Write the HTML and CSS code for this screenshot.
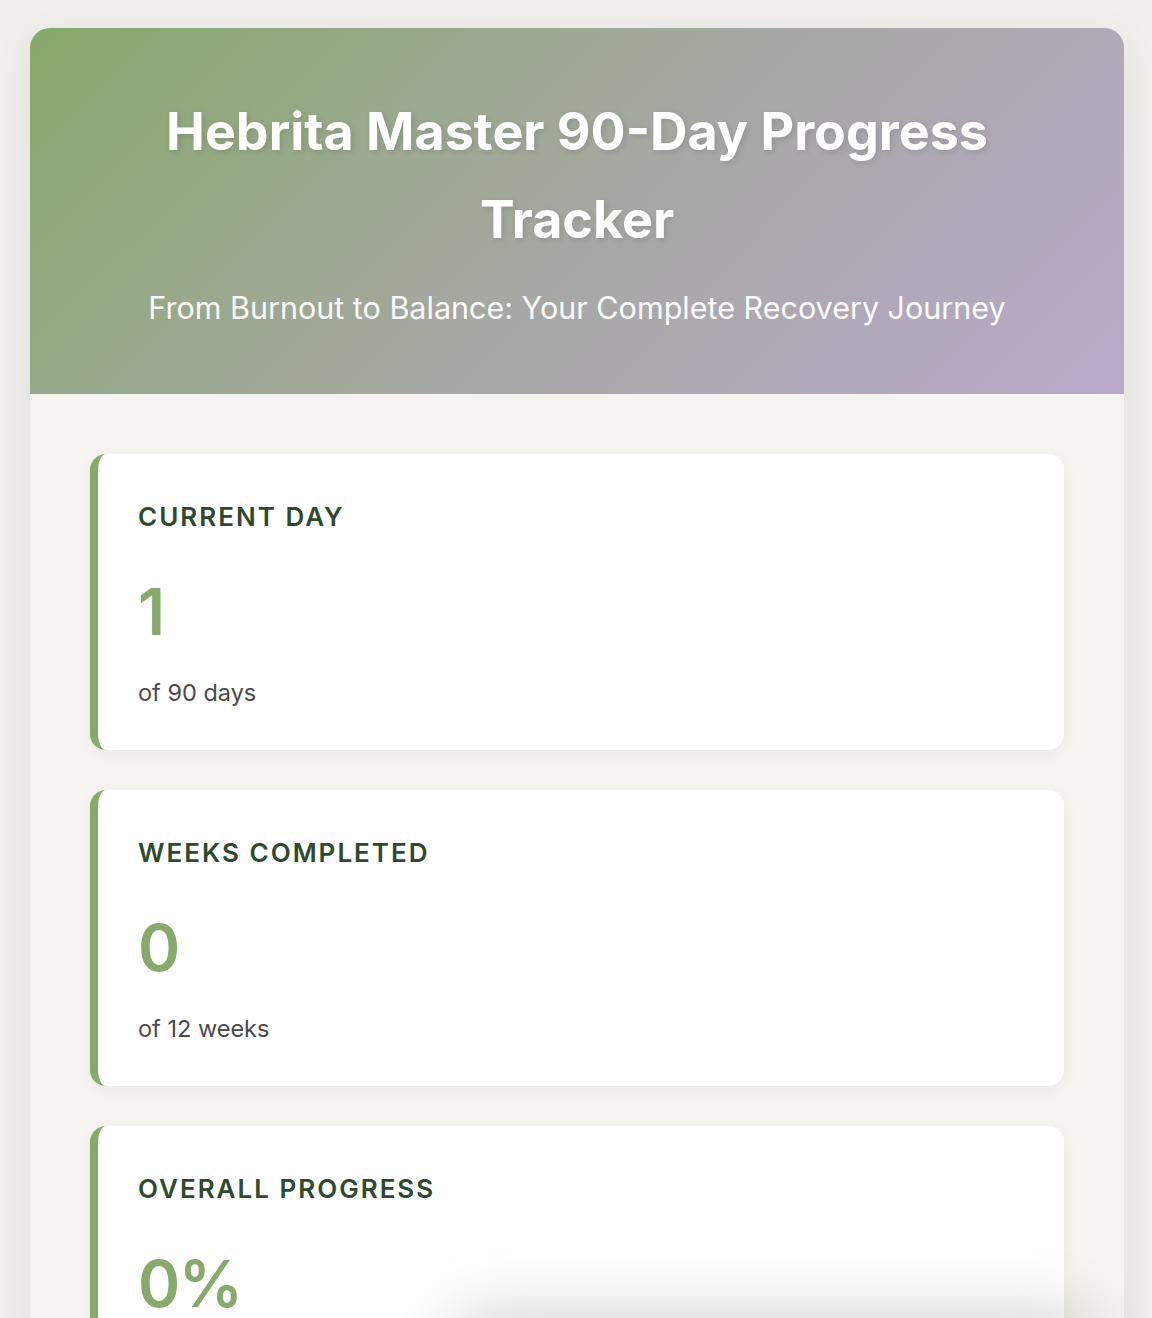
FILE: index.html
```html
<!DOCTYPE html>
<html lang="en">
<head>
    <meta charset="UTF-8">
    <meta name="viewport" content="width=device-width, initial-scale=1.0">
    <title>Hebrita Master 90-Day Progress Tracker</title>
    <link rel="stylesheet" href="styles.css">
</head>
<body>
    <div class="container">
        <header class="header">
            <h1>Hebrita Master 90-Day Progress Tracker</h1>
            <p class="subtitle">From Burnout to Balance: Your Complete Recovery Journey</p>
        </header>
        <div class="stats">
            <div class="stat-card">
                <h3>Current Day</h3>
                <div class="stat-value">1</div>
                <div class="stat-label">of 90 days</div>
            </div>
            <div class="stat-card">
                <h3>Weeks Completed</h3>
                <div class="stat-value">0</div>
                <div class="stat-label">of 12 weeks</div>
            </div>
            <div class="stat-card">
                <h3>Overall Progress</h3>
                <div class="stat-value">0%</div>
                <div class="stat-label">complete</div>
            </div>
        </div>
    </div>
    <div class="toast">Progress saved!</div>
</body>
</html>
```

FILE: styles.css
```css
body {
    margin: 0;
    padding: 28px 0 40px;
    font-family: Inter, "Noto Sans", sans-serif;
    background-color: #f1efeb;
    color: #333;
    line-height: 1.6;
}
.container {
    width: 1094px;
    margin: 0 28px 0 30px;
    background-color: #f5f4f0;
    border-radius: 20px;
    overflow: hidden;
    box-shadow: 0 10px 40px rgba(0, 0, 0, 0.07);
}
.header {
    background: linear-gradient(135deg, #87a96b 0%, #a6a8a2 50%, #b9a9cb 100%);
    color: white;
    text-align: center;
    padding: 60px 90px 62px;
}
.header h1 {
    margin: 0;
    font-size: 52px;
    font-weight: 700;
    line-height: 88px;
    text-shadow: 2px 2px 6px rgba(0, 0, 0, 0.12);
}
.subtitle {
    margin: 20px -50px 0;
    font-size: 30.5px;
    line-height: 48px;
    opacity: 0.95;
}
.stats {
    padding: 60px;
    display: flex;
    flex-direction: column;
    gap: 40px;
}
.stat-card {
    background-color: white;
    border-left: 8px solid #87a96b;
    border-radius: 16px;
    padding: 41px 40px 40px;
    box-shadow: 0 4px 16px rgba(0, 0, 0, 0.05);
}
.stat-card h3 {
    margin: 0 0 23px;
    font-size: 26px;
    font-weight: 600;
    line-height: 43px;
    letter-spacing: 2px;
    text-transform: uppercase;
    color: #2d4a2d;
}
.stat-value {
    font-size: 64px;
    font-weight: 600;
    line-height: 102px;
    letter-spacing: -1.5px;
    color: #87a96b;
    margin-bottom: 12px;
}
.stat-label {
    font-size: 23.5px;
    line-height: 35px;
    color: #4a4a4a;
}
.toast {
    position: fixed;
    right: 60px;
    bottom: -110px;
    width: 640px;
    height: 110px;
    border-radius: 16px;
    background-color: white;
    box-shadow: 0 0 70px rgba(0, 0, 0, 0.2);
    color: #2d4a2d;
    padding: 20px;
    box-sizing: border-box;
}
```
